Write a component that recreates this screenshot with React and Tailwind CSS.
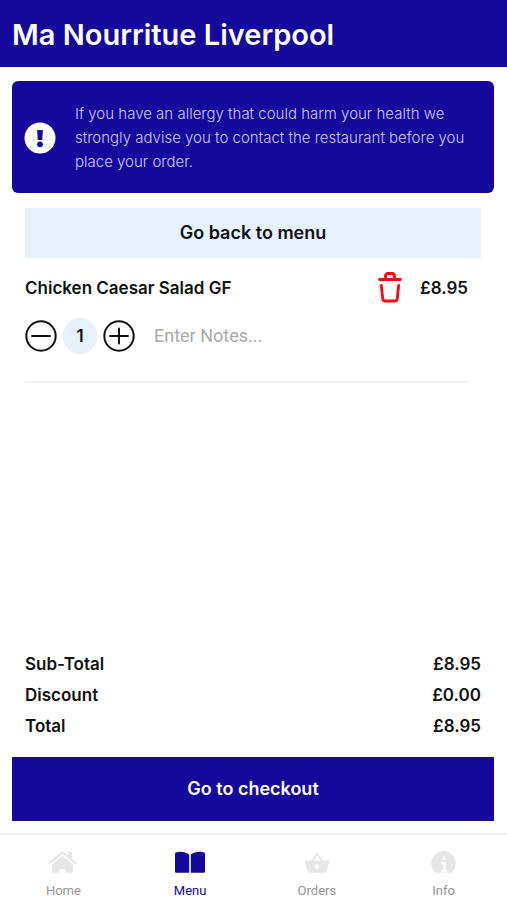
import { useState } from 'react';

const TABS = [
  { id: 'home', label: 'Home', Icon: HomeIcon },
  { id: 'menu', label: 'Menu', Icon: MenuIcon },
  { id: 'orders', label: 'Orders', Icon: BasketIcon },
  { id: 'info', label: 'Info', Icon: InfoIcon },
];

const UNIT_PRICE = 8.95;

function formatPrice(value) {
  return `£${value.toFixed(2)}`;
}

function HomeIcon() {
  return (
    <svg viewBox="0 0 30 24" className="h-6 w-[30px]" fill="currentColor" aria-hidden="true">
      <path d="M4 14.500 14.500 6 25 14.500V22a.8.8 0 0 1-.8.8H17.500V20.500q0-1.200-1.200-1.200h-3.600q-1.200 0-1.200 1.200v2.300H4.800A.8.8 0 0 1 4 22z" />
      <path d="M13.500 1.800a1.600 1.600 0 0 1 2 0l4.400 3.600V1.800h4v6.900l4.600 3.900-1.300 1.600L14.500 3.800 1.800 14.200.5 12.600z" />
    </svg>
  );
}

function MenuIcon() {
  return (
    <svg viewBox="0 0 30 24" className="h-6 w-[30px]" fill="currentColor" aria-hidden="true">
      <path d="M0 3.200Q1 1.600 5 1.700 11 2 14.200 4.400V22.700H.7Q0 22.700 0 22z" />
      <path d="M30 3.200Q29 1.600 25 1.700 19 2 15.800 4.400V22.700h13.500q.7 0 .7-.7z" />
    </svg>
  );
}

function BasketIcon() {
  return (
    <svg viewBox="0 0 30 24" className="h-6 w-[30px]" aria-hidden="true">
      <path d="M9.500 12 15 4l5.500 8" fill="none" stroke="currentColor" strokeWidth="2" strokeLinejoin="round" />
      <path
        fill="currentColor"
        fillRule="evenodd"
        d="M3.500 10.500h23q1 0 .8 1l-2.600 9.600q-.5 1.700-2.200 1.700h-15q-1.700 0-2.200-1.700L2.700 11.500q-.2-1 .8-1zM15 14.500a2.200 2.200 0 1 0 0 4.400 2.200 2.200 0 0 0 0-4.400z"
      />
    </svg>
  );
}

function InfoIcon() {
  return (
    <svg viewBox="0 0 30 24" className="h-6 w-[30px]" aria-hidden="true">
      <path d="M6.500 22.700A12.300 12.300 0 1 1 22.500 22.700z" fill="currentColor" />
      <circle cx="15" cy="8.500" r="1.800" fill="#fff" />
      <path d="M12.500 12h4.200v8h1.600v2.700h-6V20h1.600v-6h-1.400z" fill="#fff" />
    </svg>
  );
}

function TrashIcon() {
  return (
    <svg
      viewBox="0 0 24 32"
      className="h-8 w-6"
      fill="none"
      stroke="currentColor"
      strokeWidth="2.800"
      strokeLinecap="round"
      strokeLinejoin="round"
      aria-hidden="true"
    >
      <path d="M1.500 7.500h21M7.500 7.500V4q0-2.500 2.500-2.500h4q2.500 0 2.500 2.500v3.500" />
      <path d="M3.300 13.500 4.800 27q.3 2 2.200 2h10q1.900 0 2.200-2l1.500-13.500" />
    </svg>
  );
}

function RoundIcon({ plus }) {
  return (
    <svg viewBox="0 0 32 32" className="size-8" fill="none" stroke="currentColor" strokeWidth="2" aria-hidden="true">
      <circle cx="16" cy="16" r="14.700" />
      <path d="M7 16h18" strokeLinecap="round" />
      {plus && <path d="M16 8.500v15" strokeLinecap="round" />}
    </svg>
  );
}

function AllergyNotice() {
  return (
    <section className="mt-3.5 mr-[13px] ml-3 flex items-center gap-[19px] rounded-md bg-[#15089d] pt-[21px] pr-4 pb-[19px] pl-3">
      <svg viewBox="0 0 32 32" className="size-8 shrink-0" aria-hidden="true">
        <circle cx="16" cy="16" r="15.500" fill="#fff" />
        <path d="M13.100 8h5.800l-.7 10h-4.400z" fill="#15089d" />
        <circle cx="16" cy="22.300" r="2.900" fill="#15089d" />
      </svg>
      <p className="text-[15px] leading-6 font-light text-[#cfcaf2]">
        If you have an allergy that could harm your health we strongly advise you to contact the restaurant before you
        place your order.
      </p>
    </section>
  );
}

function CartItem({ quantity, onQuantityChange }) {
  return (
    <article className="mr-[13px] border-b-2 border-[#eef2f4] pb-[27px]">
      <div className="flex items-center">
        <h2 className="flex-1">Chicken Caesar Salad GF</h2>
        <button type="button" aria-label="Remove item" className="mr-[18px] text-[#f80810]">
          <TrashIcon />
        </button>
        <span>{formatPrice(UNIT_PRICE)}</span>
      </div>
      <div className="mt-3.5 flex items-center">
        <button type="button" aria-label="Decrease quantity" onClick={() => onQuantityChange(Math.max(1, quantity - 1))}>
          <RoundIcon />
        </button>
        <span className="mx-1.5 flex h-9 w-[34px] items-center justify-center rounded-full bg-[#e7f0fe]">
          {quantity}
        </span>
        <button type="button" aria-label="Increase quantity" onClick={() => onQuantityChange(quantity + 1)}>
          <RoundIcon plus />
        </button>
        <input
          type="text"
          aria-label="Notes"
          placeholder="Enter Notes..."
          className="ml-[19px] min-w-0 flex-1 font-[Roboto,sans-serif] text-lg font-normal outline-none placeholder:text-[#a8a8a8]"
        />
      </div>
    </article>
  );
}

function Totals({ subTotal }) {
  const rows = [
    ['Sub-Total', subTotal],
    ['Discount', 0],
    ['Total', subTotal],
  ];

  return (
    <dl className="mt-auto mr-[26px] ml-[25px] pb-[15px] leading-[31px]">
      {rows.map(([label, value]) => (
        <div key={label} className="flex justify-between">
          <dt>{label}</dt>
          <dd>{formatPrice(value)}</dd>
        </div>
      ))}
    </dl>
  );
}

function TabBar() {
  return (
    <nav className="grid grid-cols-4 border-t-2 border-[#f0f0f0] pt-[15px]">
      {TABS.map(({ id, label, Icon }) => {
        const active = id === 'menu';
        return (
          <a
            key={id}
            href={`#${id}`}
            aria-current={active ? 'page' : undefined}
            className={`flex flex-col items-center gap-2 font-[Roboto,sans-serif] text-[13px] leading-[18px] font-normal ${
              active ? 'text-[#15089d]' : 'text-[#969696]'
            }`}
          >
            <span className={active ? 'text-[#15089d]' : 'text-[#e6e6e6]'}>
              <Icon />
            </span>
            {label}
          </a>
        );
      })}
    </nav>
  );
}

export default function App() {
  const [quantity, setQuantity] = useState(1);

  return (
    <div className="flex min-h-screen flex-col bg-white font-[Inter,sans-serif] text-[17px] leading-7 font-semibold text-[#111111]">
      <header className="bg-[#15089d] px-3 pt-[17px] pb-3.5">
        <h1 className="text-[29px] leading-9 text-white">Ma Nourritue Liverpool</h1>
      </header>
      <main className="flex flex-1 flex-col">
        <AllergyNotice />
        <div className="mt-[15px] mr-[26px] ml-[25px]">
          <button type="button" className="mb-3.5 h-[50px] w-full bg-[#e7f0fe] text-lg">
            Go back to menu
          </button>
          <CartItem quantity={quantity} onQuantityChange={setQuantity} />
        </div>
        <Totals subTotal={UNIT_PRICE * quantity} />
        <button type="button" className="mr-[13px] mb-3 ml-3 h-16 bg-[#15089d] text-lg text-white">
          Go to checkout
        </button>
      </main>
      <TabBar />
    </div>
  );
}
